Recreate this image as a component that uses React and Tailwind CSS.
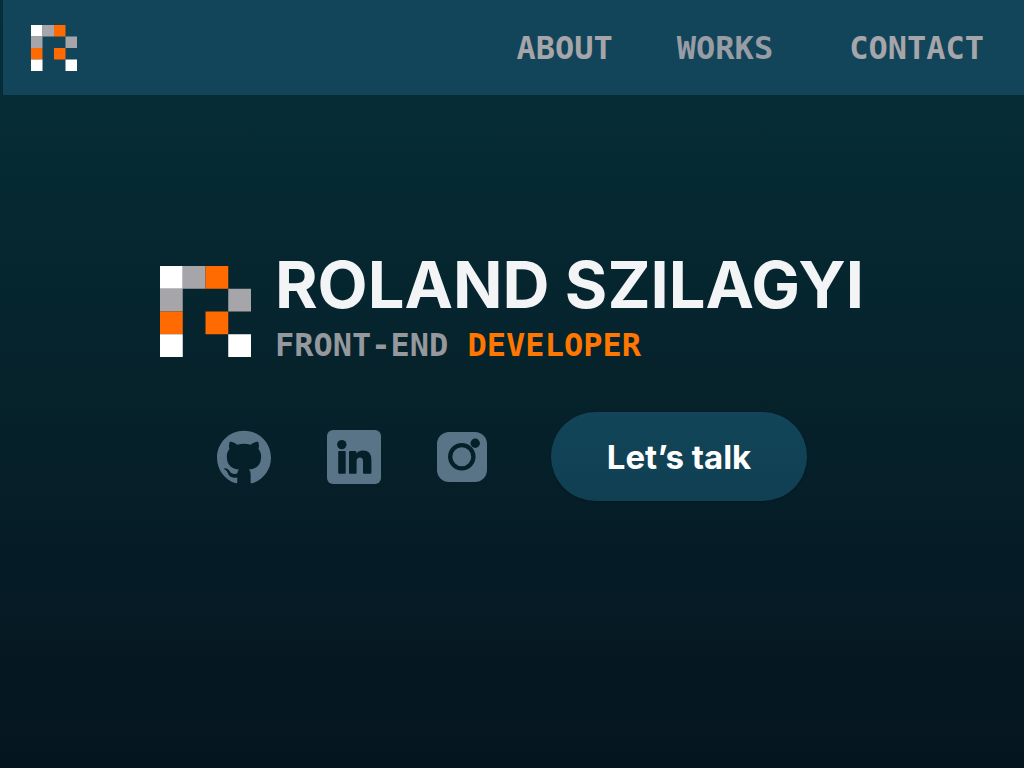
import React from 'react';
import { SiGithub } from 'react-icons/si';

const W = '#ffffff';
const G = '#a5a5aa';
const O = '#ff6b00';

const PIXELS = [
  [0, 0, W], [1, 0, G], [2, 0, O],
  [0, 1, G], [3, 1, G],
  [0, 2, O], [2, 2, O],
  [0, 3, W], [3, 3, W],
];

function Logo({ className }) {
  return (
    <svg viewBox="0 0 4 4" className={className} aria-hidden="true">
      {PIXELS.map(([x, y, fill]) => (
        <rect key={`${x}-${y}`} x={x} y={y} width="1" height="1" fill={fill} />
      ))}
    </svg>
  );
}

function LinkedIn({ className }) {
  return (
    <svg viewBox="0 0 54 54" className={className} aria-hidden="true">
      <mask id="linkedin-cut">
        <rect width="54" height="54" rx="6" fill="white" />
        <circle cx="14.8" cy="14.6" r="4.7" />
        <rect x="11.2" y="21" width="7.5" height="22.8" rx="1" />
        <path d="M23 21h5.4q1 0 1 1v1.600q2.200-3 6.600-3 8.400 0 8.400 9.400v12.800q0 1-1 1h-6.400q-1 0-1-1V31.500q0-4-3-4-3.400 0-3.400 4.200v11.100q0 1-1 1H23q-1 0-1-1V22q0-1 1-1z" />
      </mask>
      <rect width="54" height="54" fill="currentColor" mask="url(#linkedin-cut)" />
    </svg>
  );
}

function Instagram({ className }) {
  return (
    <svg viewBox="0 0 50 50" className={className} aria-hidden="true">
      <mask id="instagram-cut">
        <rect width="50" height="50" rx="12" fill="white" />
        <circle cx="24.8" cy="24.8" r="11.600" fill="none" stroke="black" strokeWidth="4.300" />
        <circle cx="38.2" cy="11.2" r="4.700" />
      </mask>
      <rect width="50" height="50" fill="currentColor" mask="url(#instagram-cut)" />
    </svg>
  );
}

export default function App() {
  return (
    <div className="flex min-h-screen flex-col bg-linear-to-b from-[#053038] to-[#05151f] font-['Inter',sans-serif]">
      <header className="ml-[3px] flex h-[95px] items-center justify-between bg-[#124559] pr-10 pl-7">
        <a href="#home" aria-label="Home">
          <Logo className="size-[46px]" />
        </a>
        <nav className="flex items-center gap-16 font-['DejaVu_Sans_Mono',monospace] text-[32px] leading-10 font-bold text-[#a5a5aa]">
          <a href="#about">ABOUT</a>
          <a href="#works" className="text-[#989ca5]">WORKS</a>
          <a href="#contact" className="ml-3">CONTACT</a>
        </nav>
      </header>

      <main className="flex flex-col items-center pt-[158px]">
        <div className="flex items-center gap-6">
          <Logo className="mt-1 size-[91px]" />
          <div>
            <h1 className="text-[65px] leading-[64px] font-bold whitespace-nowrap text-[#f3f4f6]">ROLAND SZILAGYI</h1>
            <p className="mt-2 font-['DejaVu_Sans_Mono',monospace] text-[32px] leading-10 font-bold whitespace-nowrap text-[#95989d]">
              FRONT-END <span className="text-[#ff7600]">DEVELOPER</span>
            </p>
          </div>
        </div>

        <div className="mt-[47px] flex items-center gap-14 text-[#597387]">
          <a href="#github" aria-label="GitHub"><SiGithub className="size-[54px]" /></a>
          <a href="#linkedin" aria-label="LinkedIn"><LinkedIn className="size-[54px]" /></a>
          <a href="#instagram" aria-label="Instagram"><Instagram className="size-[50px]" /></a>
          <button type="button" className="ml-2 h-[89px] w-[256px] rounded-full bg-linear-to-b from-[#124559] to-[#103f52] text-[33px] leading-10 font-bold text-white shadow-sm">
            Let’s talk
          </button>
        </div>
      </main>
    </div>
  );
}
